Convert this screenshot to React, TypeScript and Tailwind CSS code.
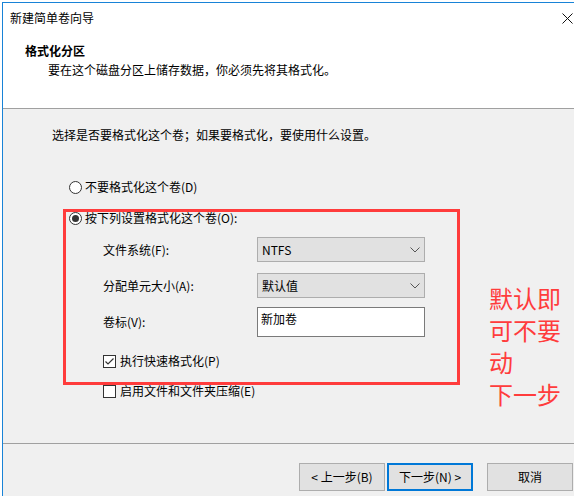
import React from 'react';

const font = { fontFamily: '"Noto Sans CJK SC", "Noto Sans", sans-serif' };

const Radio: React.FC<{ checked?: boolean; label: string }> = ({ checked, label }) => (
    <div className="flex items-center h-[18px] gap-[3px]">
        <span className="w-[13px] h-[13px] rounded-full border border-[#333] bg-white flex items-center justify-center">
            {checked && <span className="w-[7px] h-[7px] rounded-full bg-[#333]" />}
        </span>
        <span>{label}</span>
    </div>
);

const Checkbox: React.FC<{ checked?: boolean; label: string }> = ({ checked, label }) => (
    <div className="flex items-center h-[18px] gap-[4px]">
        <span className="w-[13px] h-[13px] border border-[#333] bg-white flex items-center justify-center">
            {checked && (
                <svg width="11" height="11" viewBox="0 0 11 11">
                    <path d="M1.5 5.5 L4 8 L9.5 2.5" fill="none" stroke="#333" strokeWidth="1.2" />
                </svg>
            )}
        </span>
        <span>{label}</span>
    </div>
);

const Select: React.FC<{ value: string }> = ({ value }) => (
    <div className="w-[168px] h-[25px] bg-[#e1e1e1] border border-[#adadad] flex items-center justify-between pl-[4px] pr-[4px]">
        <span>{value}</span>
        <svg width="10" height="6" viewBox="0 0 10 6">
            <path d="M0.5 0.5 L5 5 L9.5 0.5" fill="none" stroke="#555" strokeWidth="1" />
        </svg>
    </div>
);

const WizardButton: React.FC<{ label: string; primary?: boolean }> = ({ label, primary }) => (
    <button
        className={`w-[86px] h-[28px] bg-[#e1e1e1] flex items-center justify-center text-[12px] ${
            primary ? 'border-2 border-[#0078d7]' : 'border border-[#adadad]'
        }`}
    >
        {label}
    </button>
);

export default function App() {
    return (
        <div className="relative w-[574px] h-[496px] overflow-hidden bg-white flex pt-[2px] pl-[2px] text-[12px] leading-[18px] text-black" style={font}>
            {/* wizard window */}
            <div className="w-[572px] border-t border-l border-[#1883d7] flex flex-col bg-[#f0f0f0]">
                {/* header */}
                <div className="h-[106px] bg-white border-b border-[#a0a0a0] flex flex-col">
                    <div className="h-[30px] flex items-center justify-between pl-[7px] pr-[1px]">
                        <span>新建简单卷向导</span>
                        <svg width="11" height="11" viewBox="0 0 11 11">
                            <path d="M0.5 0.5 L10.5 10.5 M10.5 0.5 L0.5 10.5" stroke="#111" strokeWidth="1" />
                        </svg>
                    </div>
                    <div className="pl-[22px] mt-[9px] font-bold">格式化分区</div>
                    <div className="pl-[45px] mt-[1px]">要在这个磁盘分区上储存数据，你必须先将其格式化。</div>
                </div>

                {/* body */}
                <div className="h-[335px] border-b border-[#a0a0a0] flex flex-col">
                    <div className="pl-[49px] pt-[17px]">选择是否要格式化这个卷；如果要格式化，要使用什么设置。</div>
                    <div className="pl-[66px] mt-[34px]">
                        <Radio label="不要格式化这个卷(D)" />
                    </div>
                    <div className="pl-[66px] mt-[13px]">
                        <Radio checked label="按下列设置格式化这个卷(O):" />
                    </div>
                    <div className="pl-[100px] mt-[10px] grid grid-cols-[154px_168px] items-center gap-y-[11px]">
                        <span>文件系统(F):</span>
                        <Select value="NTFS" />
                        <span>分配单元大小(A):</span>
                        <Select value="默认值" />
                        <span className="-mt-[2px]">卷标(V):</span>
                        <div className="h-[30px] bg-white border border-[#7a7a7a] pl-[3px] pt-[2px] -mt-[2px]">新加卷</div>
                    </div>
                    <div className="pl-[100px] mt-[15px]">
                        <Checkbox checked label="执行快速格式化(P)" />
                    </div>
                    <div className="pl-[100px] mt-[12px]">
                        <Checkbox label="启用文件和文件夹压缩(E)" />
                    </div>
                </div>

                {/* footer buttons */}
                <div className="flex justify-end pt-[19px] pr-[1px]">
                    <div className="flex gap-[2px]">
                        <WizardButton label="< 上一步(B)" />
                        <WizardButton primary label="下一步(N) >" />
                    </div>
                    <div className="ml-[14px]">
                        <WizardButton label="取消" />
                    </div>
                </div>
            </div>

            {/* red annotation over the dialog */}
            <div className="absolute left-[63px] top-[209px] w-[397px] h-[176px] border-[3px] border-[#ff3c3c]" />
            <div className="absolute left-[489px] top-[282px] text-[24px] leading-[32px] text-[#ff3c3c]">
                <div>默认即</div>
                <div>可不要</div>
                <div>动</div>
                <div>下一步</div>
            </div>
        </div>
    );
}
